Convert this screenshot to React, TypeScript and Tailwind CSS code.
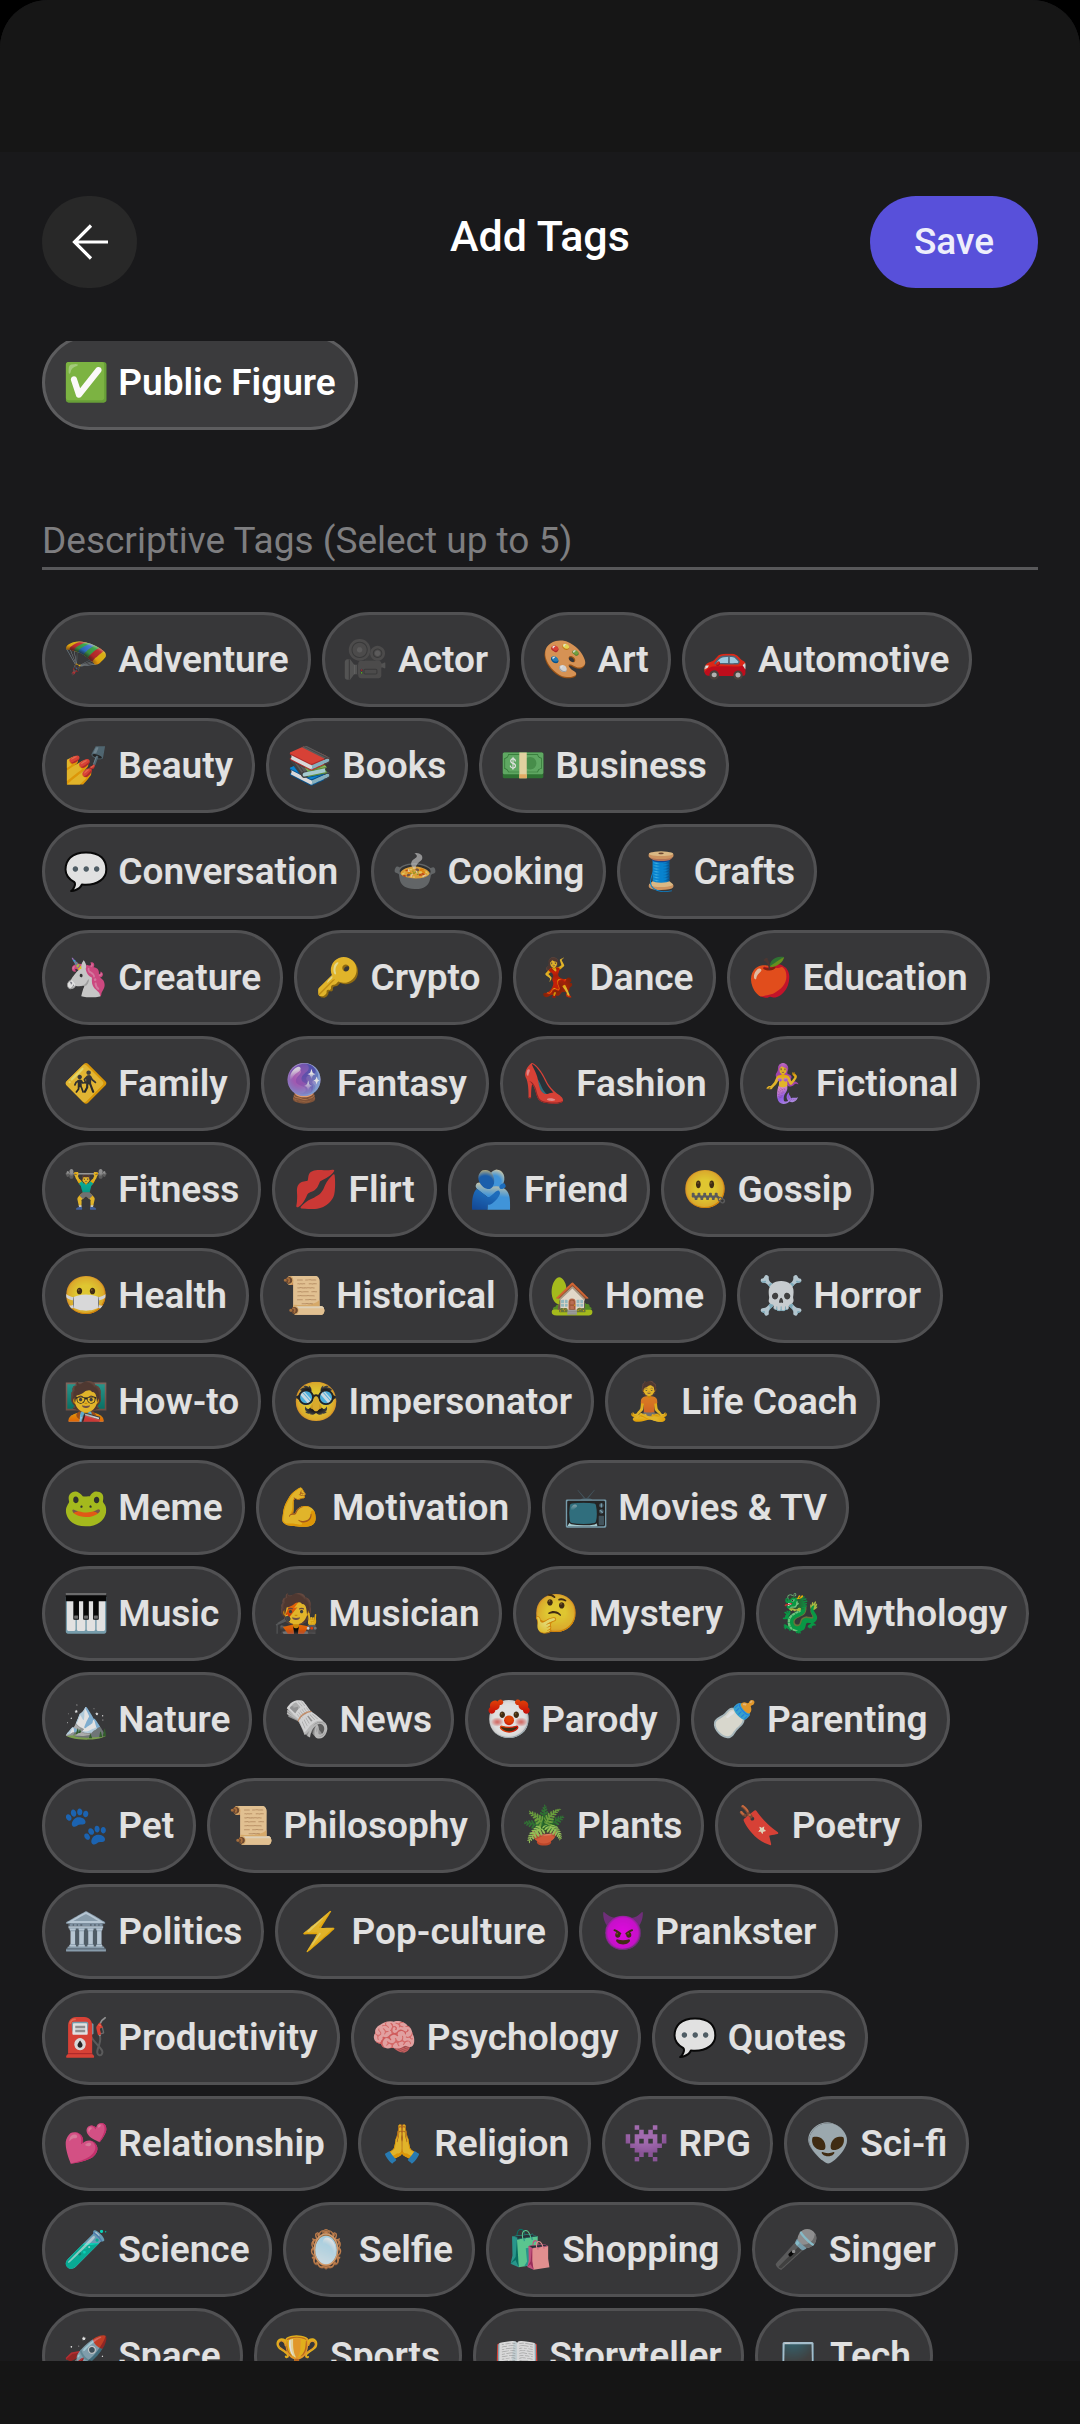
import React, { useState } from 'react';

interface Tag {
    emoji: string;
    label: string;
}

const descriptiveTags: Tag[] = [
    { emoji: '🪂', label: 'Adventure' },
    { emoji: '🎥', label: 'Actor' },
    { emoji: '🎨', label: 'Art' },
    { emoji: '🚗', label: 'Automotive' },
    { emoji: '💅', label: 'Beauty' },
    { emoji: '📚', label: 'Books' },
    { emoji: '💵', label: 'Business' },
    { emoji: '💬', label: 'Conversation' },
    { emoji: '🍲', label: 'Cooking' },
    { emoji: '🧵', label: 'Crafts' },
    { emoji: '🦄', label: 'Creature' },
    { emoji: '🔑', label: 'Crypto' },
    { emoji: '💃', label: 'Dance' },
    { emoji: '🍎', label: 'Education' },
    { emoji: '🚸', label: 'Family' },
    { emoji: '🔮', label: 'Fantasy' },
    { emoji: '👠', label: 'Fashion' },
    { emoji: '🧜‍♀️', label: 'Fictional' },
    { emoji: '🏋️‍♂️', label: 'Fitness' },
    { emoji: '💋', label: 'Flirt' },
    { emoji: '🫂', label: 'Friend' },
    { emoji: '🤐', label: 'Gossip' },
    { emoji: '😷', label: 'Health' },
    { emoji: '📜', label: 'Historical' },
    { emoji: '🏡', label: 'Home' },
    { emoji: '☠️', label: 'Horror' },
    { emoji: '🧑‍🏫', label: 'How-to' },
    { emoji: '🥸', label: 'Impersonator' },
    { emoji: '🧘', label: 'Life Coach' },
    { emoji: '🐸', label: 'Meme' },
    { emoji: '💪', label: 'Motivation' },
    { emoji: '📺', label: 'Movies & TV' },
    { emoji: '🎹', label: 'Music' },
    { emoji: '🧑‍🎤', label: 'Musician' },
    { emoji: '🤔', label: 'Mystery' },
    { emoji: '🐉', label: 'Mythology' },
    { emoji: '🏔️', label: 'Nature' },
    { emoji: '🗞️', label: 'News' },
    { emoji: '🤡', label: 'Parody' },
    { emoji: '🍼', label: 'Parenting' },
    { emoji: '🐾', label: 'Pet' },
    { emoji: '📜', label: 'Philosophy' },
    { emoji: '🪴', label: 'Plants' },
    { emoji: '🔖', label: 'Poetry' },
    { emoji: '🏛️', label: 'Politics' },
    { emoji: '⚡', label: 'Pop-culture' },
    { emoji: '😈', label: 'Prankster' },
    { emoji: '⛽', label: 'Productivity' },
    { emoji: '🧠', label: 'Psychology' },
    { emoji: '💬', label: 'Quotes' },
    { emoji: '💕', label: 'Relationship' },
    { emoji: '🙏', label: 'Religion' },
    { emoji: '👾', label: 'RPG' },
    { emoji: '👽', label: 'Sci-fi' },
    { emoji: '🧪', label: 'Science' },
    { emoji: '🪞', label: 'Selfie' },
    { emoji: '🛍️', label: 'Shopping' },
    { emoji: '🎤', label: 'Singer' },
    { emoji: '🚀', label: 'Space' },
    { emoji: '🏆', label: 'Sports' },
    { emoji: '📖', label: 'Storyteller' },
    { emoji: '💻', label: 'Tech' },
];

const MAX_TAGS = 5;

const TagChip: React.FC<{ tag: Tag; active: boolean; onClick: () => void }> = ({ tag, active, onClick }) => (
    <button
        type="button"
        aria-pressed={active}
        onClick={onClick}
        className={`flex h-[95px] items-center whitespace-pre rounded-full border-[3px] pr-[19px] pl-[18px] text-[37px] leading-[44px] font-semibold ${active ? 'border-[#5d5d5f] bg-[#3b3b3d] text-white' : 'border-[#515153] bg-[#373739] text-white/85'}`}
    >
        {tag.emoji} {tag.label}
    </button>
);

const App: React.FC = () => {
    const [publicFigure, setPublicFigure] = useState(true);
    const [selected, setSelected] = useState<string[]>([]);

    const toggle = (label: string) => {
        if (selected.includes(label)) {
            setSelected(selected.filter((item) => item !== label));
        } else if (selected.length < MAX_TAGS) {
            setSelected([...selected, label]);
        }
    };

    return (
        <div className="h-screen bg-black font-['Roboto','Noto_Color_Emoji',sans-serif]">
            <div className="flex h-full flex-col overflow-hidden rounded-t-[48px] bg-[#19191b]">
                {/* Status bar */}
                <div className="h-[152px] shrink-0 bg-[#161616]" />

                <header className="grid h-[189px] shrink-0 grid-cols-[1fr_auto_1fr] items-start px-[42px] pt-11">
                    <button
                        type="button"
                        aria-label="Back"
                        className="flex h-[92px] w-[95px] items-center justify-center rounded-full bg-[#282828] text-white"
                    >
                        <svg viewBox="0 0 36 36" className="size-9" fill="none" stroke="currentColor" strokeWidth="3.2">
                            <path d="M36 18H3M19 1.500 2.500 18 19 34.500" />
                        </svg>
                    </button>
                    <h1 className="pt-4 text-[43px] leading-[48px] font-medium text-white">Add Tags</h1>
                    <button
                        type="button"
                        className="h-[92px] justify-self-end rounded-full bg-[#5850da] px-11 text-[37px] font-medium text-[#eeeefb]"
                    >
                        Save
                    </button>
                </header>

                <main className="min-h-0 flex-1 overflow-y-auto px-[42px] [scrollbar-width:none]">
                    {/* List is scrolled slightly past the top of the first chip */}
                    <section className="-mt-1.5 flex">
                        <TagChip
                            tag={{ emoji: '✅', label: 'Public Figure' }}
                            active={publicFigure}
                            onClick={() => setPublicFigure(!publicFigure)}
                        />
                    </section>

                    <section className="pt-[88px]">
                        <h2 className="border-b-[3px] border-[#58585a] pb-[3px] text-[37px] leading-[46px] text-[#7e7e80]">
                            Descriptive Tags (Select up to {MAX_TAGS})
                        </h2>
                        <div className="mt-[42px] flex flex-wrap gap-[11px]">
                            {descriptiveTags.map((tag) => (
                                <TagChip
                                    key={tag.label}
                                    tag={tag}
                                    active={selected.includes(tag.label)}
                                    onClick={() => toggle(tag.label)}
                                />
                            ))}
                        </div>
                    </section>
                </main>

                {/* Navigation bar */}
                <div className="h-[63px] shrink-0 bg-[#151515]" />
            </div>
        </div>
    );
};

export default App;
